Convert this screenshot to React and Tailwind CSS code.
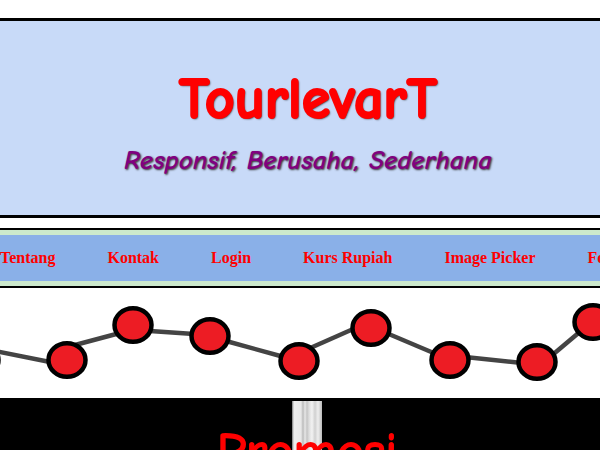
const links = ["Tentang", "Kontak", "Login", "Kurs Rupiah", "Image Picker", "Forum"];

const points = [
  [-20, 72],
  [67, 72],
  [133, 37],
  [210, 48],
  [299, 73],
  [371, 40],
  [450, 72],
  [537, 74],
  [593, 34],
];

const segments = [
  [-5, 63, 50, 74],
  [75, 57, 120, 45],
  [150, 43, 194, 46],
  [226, 53, 284, 69],
  [308, 61, 360, 38],
  [384, 44, 436, 66],
  [465, 69, 522, 75],
  [550, 69, 582, 42],
];

function RouteLine() {
  return (
    <svg
      className="block h-[110px] w-full"
      viewBox="0 0 600 110"
      preserveAspectRatio="xMidYMid slice"
      aria-hidden="true"
    >
      {segments.map(([x1, y1, x2, y2]) => (
        <line key={x1} x1={x1} y1={y1} x2={x2} y2={y2} stroke="#444444" strokeWidth="4.5" />
      ))}
      {points.map(([x, y]) => (
        <ellipse key={x} cx={x} cy={y} rx="18.5" ry="16.8" fill="#ed1c24" stroke="#000" strokeWidth="4.5" />
      ))}
    </svg>
  );
}

export default function App() {
  return (
    <div className="h-screen overflow-hidden bg-white pt-[18px]">
      <header className="border-y-[3px] border-black bg-[#c8daf8] pt-11 pb-9 pl-4 text-center font-['Comic_Sans_MS','Comic_Neue','Open_Sans',sans-serif]">
        <h1 className="text-[58px] leading-[70px] font-bold text-[#ff0000] [-webkit-text-stroke:2px_#ff0000] [text-shadow:1px_1px_2px_#222]">
          TourlevarT
        </h1>
        <p className="pt-2 text-[27px] leading-9 font-bold text-[#800080] italic [text-shadow:1px_1px_2px_#333]">
          Responsif, Berusaha, Sederhana
        </p>
      </header>

      <nav className="mt-[10px] border-y-2 border-black bg-[#cce9cc] py-[5px]">
        <ul className="flex h-[46px] items-center gap-[52px] overflow-hidden bg-[#8ab0e8] font-['Liberation_Serif',serif] text-base font-bold whitespace-nowrap text-[#ff0000]">
          {links.map((label) => (
            <li key={label}>
              <a href={"#" + label.toLowerCase().replace(" ", "-")}>{label}</a>
            </li>
          ))}
        </ul>
      </nav>

      <RouteLine />

      <section className="bg-black pt-[3px] pl-[14px]">
        <div className="bg-[linear-gradient(90deg,#777_0px,#eee_2px,#e8e8e8_9px,#bbb_11px,#e8e8e8_13px,#c4c4c4_15px,#ddd_17px,#f2f2f2_20px,#d0d0d0_23px,#eee_26px,#bbb_30px)] bg-[length:30px_100%] bg-[position:center_top] bg-no-repeat pt-4">
          <h2 className="text-center font-['Comic_Sans_MS','Comic_Neue','Open_Sans',sans-serif] text-[52px] leading-[70px] text-[#ff0000] [-webkit-text-stroke:2px_#ff0000]">
            Promosi
          </h2>
        </div>
      </section>
    </div>
  );
}
